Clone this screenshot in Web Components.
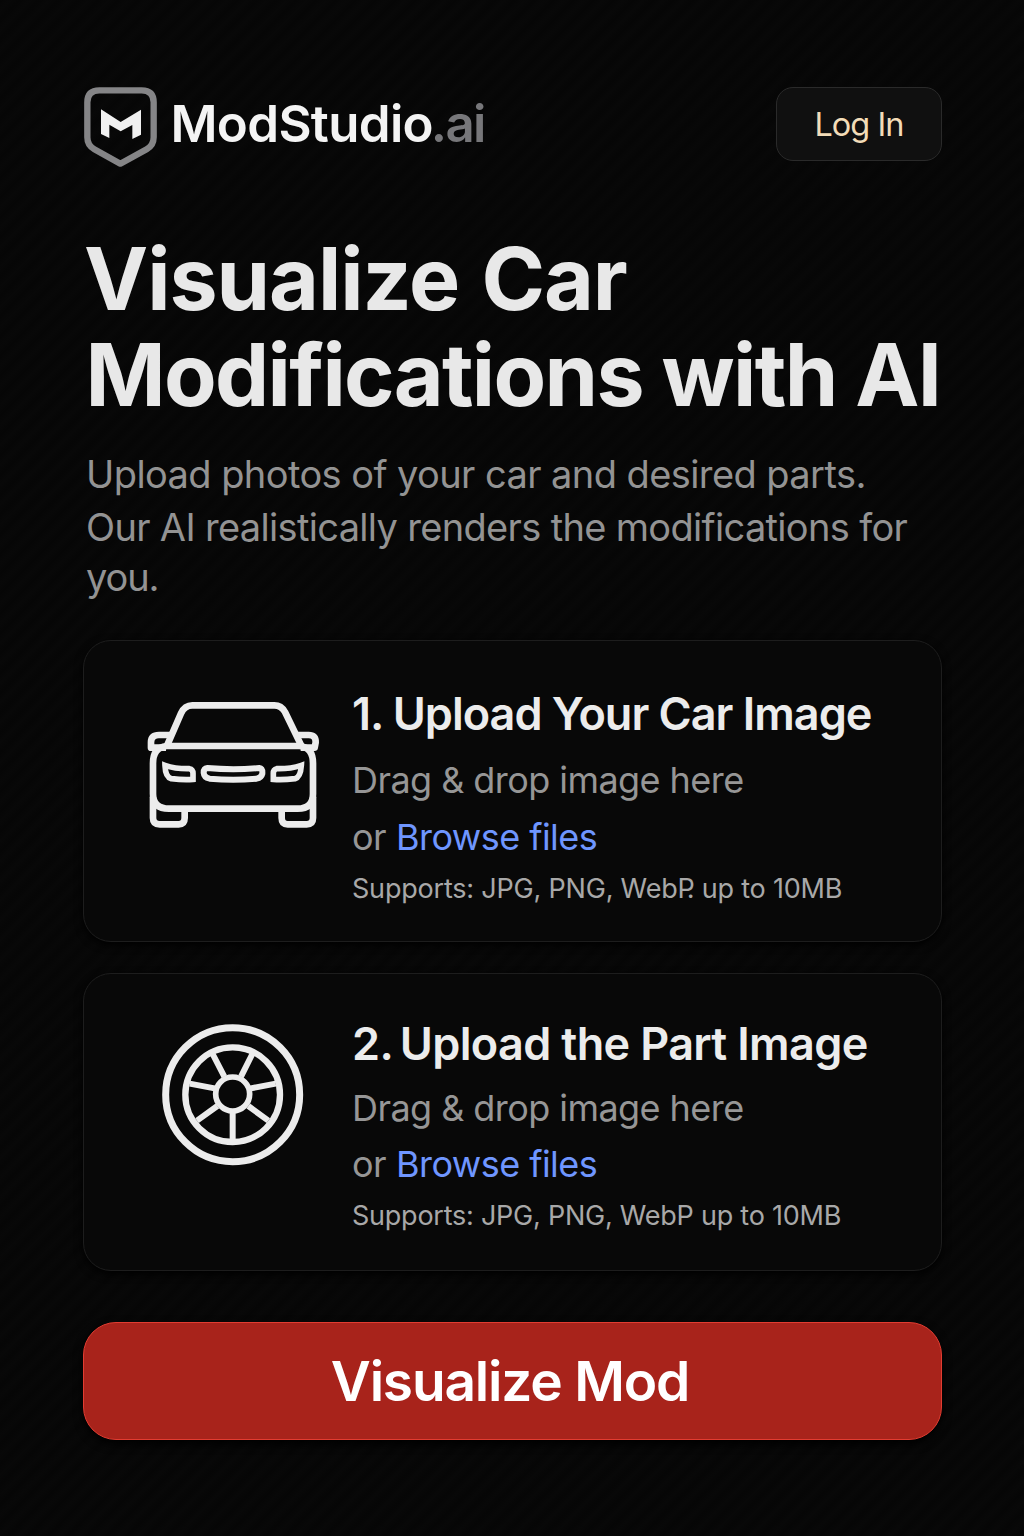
<!DOCTYPE html>
<html lang="en">
<head>
<meta charset="utf-8">
<title>ModStudio.ai</title>
<style>
html,body{margin:0;background:#070707}
body{width:1024px;height:1536px;overflow:hidden;font-family:Inter,"Liberation Sans",sans-serif;-webkit-font-smoothing:antialiased}
</style>
</head>
<body>
<mod-page></mod-page>
<script>
const define = (name, html) => customElements.define(name, class extends HTMLElement {
  constructor() {
    super();
    const t = document.createElement('template');
    t.innerHTML = html;
    this.attachShadow({ mode: 'open' }).append(t.content.cloneNode(true));
  }
});

/* One line of text; size, tracking and line height come in as custom properties. */
define('text-line', `<style>
:host{display:block;white-space:nowrap;font-size:var(--s);line-height:var(--l);height:var(--l);letter-spacing:var(--t,0)}
</style><slot></slot>`);

define('brand-logo', `<style>
:host{display:flex;align-items:flex-start;height:80px}
svg{display:block;width:74px;height:80px;flex:none}
text-line{--s:51px;--l:62px;--t:-.68px;margin:6px 0 0 13.5px;font-weight:600;color:#f4f4f4}
span{color:#77777a;letter-spacing:-1.6px;margin-left:-2.2px}
</style>
<svg viewBox="39 51 222 240">
<path d="M88 61H215Q251 61 251 97V202Q251 226 230 238L151 281L73 238Q52 226 52 202V97Q52 61 88 61Z" fill="none" stroke="#858587" stroke-width="19" stroke-linejoin="round"/>
<path d="M93 118L152 156L213 119V194L187 207V165L152 184L118 164V204L93 192Z" fill="#f0f0f0"/>
</svg>
<text-line>ModStudio<span>.ai</span></text-line>`);

define('login-button', `<style>
:host{display:flex;justify-content:center;box-sizing:border-box;width:166px;height:74px;border:1.5px solid #2a2a2a;border-radius:17px;background:#101010;color:#f3dcb8}
text-line{--s:32.5px;--l:74px;--t:-.95px;font-weight:400;margin-left:0}
</style><text-line>Log In</text-line>`);

define('hero-title', `<style>
:host{display:block;color:#e8e8e8;font-weight:700}
text-line{--s:86px;--l:96px;--t:-1.05px;word-spacing:3px}
.b{--t:-1.68px;word-spacing:0;margin-left:1.5px}
</style><text-line>Visualize Car</text-line><text-line class="b">Modifications with AI</text-line>`);

define('hero-copy', `<style>
:host{display:block;color:#939393;font-weight:400}
text-line{--s:38px;--l:53px;--t:-.58px}
.b{--t:-.67px}
.c{--l:47px;--t:-1.1px}
</style><text-line>Upload photos of your car and desired parts.</text-line><text-line class="b">Our AI realistically renders the modifications for</text-line><text-line class="c">you.</text-line>`);

define('car-icon', `<style>:host{display:block;width:210px;height:170px}svg{display:block}</style>
<svg width="210" height="170" viewBox="0 0 630 510" fill="none" stroke="#ececec" stroke-width="20" stroke-linejoin="round">
<path d="M111 197L153 100Q164 76 187 76H433Q454 76 465 96L514 197"/>
<path d="M126 165H87Q63 165 63 187V203H108"/>
<path d="M498 165H536Q558 165 557 187L554 203H512"/>
<path d="M110 198H509Q549 202 549 250V342Q549 386 503 386H117Q69 386 69 342V250Q69 202 110 198Z"/>
<path d="M69 350V414Q69 433 89 433H146Q164 433 164 414V388"/>
<path d="M549 350V414Q549 433 530 433H473Q455 433 455 414V388"/>
<path d="M105 256Q138 267 178 266Q189 268 189 280V298Q160 300 124 296Q106 291 105 256Z" stroke-width="17" stroke-linejoin="miter"/>
<path d="M514 256Q480 267 440 266Q430 268 430 280V298Q459 300 495 296Q512 291 514 256Z" stroke-width="17" stroke-linejoin="miter"/>
<path stroke-width="18" d="M232 264Q310 271 388 264Q398 265 397 281Q394 293 380 296Q310 302 239 296Q222 292 221 278Q221 265 232 264Z"/>
</svg>`);

define('wheel-icon', `<style>:host{display:block;width:180px;height:180px}svg{display:block}</style>
<svg width="180" height="180" viewBox="0 0 540 540" fill="none" stroke="#ececec">
<circle cx="263" cy="269" r="201" stroke-width="21"/>
<circle cx="263" cy="269" r="142" stroke-width="19"/>
<circle cx="263" cy="267" r="51" stroke-width="17"/>
<path stroke-width="18" d="M263 322V405M217 303L156 347M209 250L134 236M238 215L203 147M288 215L322 147M317 250L392 236M310 303L370 347"/>
</svg>`);

define('upload-card', `<style>
:host{display:flex;align-items:flex-start;box-sizing:border-box;height:var(--h);border:1.5px solid #1d1d1d;border-radius:28px;background:#080808;box-shadow:0 3px 8px #000}
.icon{margin:var(--icon)}
.text{margin-top:var(--top)}
.title{--s:45px;--l:54px;font-weight:600;color:#ececec;--t:var(--tt)}
.drop,.or{--s:36px;--l:var(--row);--t:-.56px;color:#969696}
.drop{margin-top:var(--gap)}
.or{display:flex;gap:10px}
.note{--s:27px;--l:36px;--t:var(--nt);color:#a8a8a8;margin-top:var(--ng)}
a{color:#6f96ff;text-decoration:none}
</style>
<div class="icon"><slot name="icon"></slot></div>
<div class="text">
<text-line class="title"><slot name="title"></slot></text-line>
<text-line class="drop">Drag &amp; drop image here</text-line>
<div class="or"><text-line>or</text-line><text-line><a>Browse files</a></text-line></div>
<text-line class="note"><slot name="note"></slot></text-line>
</div>`);

define('primary-button', `<style>
:host{display:flex;justify-content:center;box-sizing:border-box;height:118px;border:1.5px solid #e23c31;border-radius:33px;background:#a8231b;color:#fff;font-weight:600;box-shadow:0 4px 10px #000}
text-line{--s:55px;--l:117px;--t:-1.18px;margin-right:5px}
</style><text-line>Visualize Mod</text-line>`);

define('mod-page', `<style>
:host{display:flex;flex-direction:column;box-sizing:border-box;width:1024px;height:1536px;padding:87px 82px 0 83px;background:repeating-linear-gradient(135deg,#060606 0,#080808 7px,#060606 14px)}
header{display:flex;justify-content:space-between;align-items:flex-start}
hero-title{margin:64px 0 0 1px}
hero-copy{margin:25px 0 0 3px}
.one{margin-top:39px;--h:302px;--icon:39px 12px 0 46px;--top:46px;--gap:11px;--row:57px;--ng:5px;--tt:-1px;--nt:-.2px}
.two{margin-top:31px;--h:298px;--icon:31px 27px 0 61px;--top:43px;--gap:9px;--row:56px;--ng:6px;--tt:-.65px;--nt:-.24px}
.n1{margin-right:-1px}
.n2{margin-right:-4px}
.p{letter-spacing:-8px}
primary-button{margin-top:51px}
</style>
<header><brand-logo></brand-logo><login-button></login-button></header>
<hero-title></hero-title>
<hero-copy></hero-copy>
<upload-card class="one"><car-icon slot="icon"></car-icon><span slot="title"><span class="n1">1.</span> Upload Your Car Image</span><span slot="note">Supports: JPG, PNG, Web<span class="p">P</span>. up to 10MB</span></upload-card>
<upload-card class="two"><wheel-icon slot="icon"></wheel-icon><span slot="title"><span class="n2">2.</span> Upload the Part Image</span><span slot="note">Supports: JPG, PNG, WebP up to 10MB</span></upload-card>
<primary-button></primary-button>`);
</script>
</body>
</html>
